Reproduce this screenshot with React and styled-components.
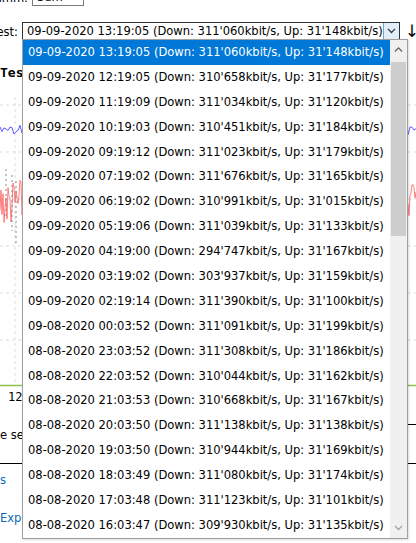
import styled, { createGlobalStyle } from "styled-components";

const Global = createGlobalStyle`
  html, body { margin: 0; padding: 0; background: #fff; overflow: hidden; }
  body { font-family: "DejaVu Sans Condensed", "Liberation Sans", sans-serif; font-size: 12.8px; color: #000; }
`;

const items = [
  ["09-09-2020 13:19:05", "311'060", "31'148"],
  ["09-09-2020 12:19:05", "310'658", "31'177"],
  ["09-09-2020 11:19:09", "311'034", "31'120"],
  ["09-09-2020 10:19:03", "310'451", "31'184"],
  ["09-09-2020 09:19:12", "311'023", "31'179"],
  ["09-09-2020 07:19:02", "311'676", "31'165"],
  ["09-09-2020 06:19:02", "310'991", "31'015"],
  ["09-09-2020 05:19:06", "311'039", "31'133"],
  ["09-09-2020 04:19:00", "294'747", "31'167"],
  ["09-09-2020 03:19:02", "303'937", "31'159"],
  ["09-09-2020 02:19:14", "311'390", "31'100"],
  ["09-08-2020 00:03:52", "311'091", "31'199"],
  ["08-08-2020 23:03:52", "311'308", "31'186"],
  ["08-08-2020 22:03:52", "310'044", "31'162"],
  ["08-08-2020 21:03:53", "310'668", "31'167"],
  ["08-08-2020 20:03:50", "311'138", "31'138"],
  ["08-08-2020 19:03:50", "310'944", "31'169"],
  ["08-08-2020 18:03:49", "311'080", "31'174"],
  ["08-08-2020 17:03:48", "311'123", "31'101"],
  ["08-08-2020 16:03:47", "309'930", "31'135"],
];

const label = (r) => `${r[0]} (Down: ${r[1]}kbit/s, Up: ${r[2]}kbit/s)`;

const Page = styled.div`
  position: relative;
  width: 416px;
  height: 543px;
  overflow: hidden;
`;

const Content = styled.div`
  display: flex;
  flex-direction: column;
  margin-top: -12px;
`;

const FormRow = styled.div`
  display: flex;
  align-items: center;
  height: 18px;
  margin-bottom: ${(p) => p.$mb || 0}px;
`;

// label column whose start is scrolled out of view on the left
const Label = styled.div`
  width: ${(p) => p.$w}px;
  flex-shrink: 0;
  display: flex;
  justify-content: flex-end;
  overflow: hidden;
  white-space: nowrap;
  padding-right: ${(p) => p.$pad}px;
  box-sizing: border-box;
  span { flex-shrink: 0; }
`;

const Select = styled.div`
  display: flex;
  align-items: stretch;
  height: 18px;
  width: ${(p) => p.$w}px;
  box-sizing: border-box;
  border: 1px solid ${(p) => (p.$open ? "#333" : "#7a7a7a")};
  background: #fff;
`;

const SelectText = styled.div`
  flex: 1;
  padding-left: 4px;
  line-height: 16px;
  white-space: nowrap;
  overflow: hidden;
`;

const SelectBtn = styled.div`
  width: 15px;
  display: flex;
  align-items: center;
  justify-content: center;
  background: ${(p) => (p.$open ? "#e1eefa" : "#fff")};
  border-left: 1px solid ${(p) => (p.$open ? "#6aa5dd" : "#fff")};
`;

const Arrow = styled.div`
  width: 14px;
  text-align: center;
  font-family: "DejaVu Sans", sans-serif;
  font-size: 17px;
  line-height: 18px;
  margin-left: 5px;
`;

const Heading = styled.div`
  font-family: "DejaVu Sans Mono", monospace;
  font-weight: bold;
  font-size: 13px;
  height: 18px;
  line-height: 18px;
  white-space: nowrap;
  margin-bottom: 15px;
`;

const ChartBox = styled.div`
  height: 292px;
`;

const AxisLabel = styled.div`
  font-family: "DejaVu Sans Mono", monospace;
  font-size: 12px;
  padding-left: 8px;
  height: 16px;
  line-height: 16px;
  margin-bottom: 19px;
`;

const InfoRow = styled.div`
  display: flex;
  align-items: flex-start;
  height: 26px;
  margin-bottom: 13px;
`;

const Para = styled.div`
  white-space: nowrap;
  margin-top: 2px;
  height: 18px;
  line-height: 18px;
`;

const TableEdge = styled.div`
  flex: 1;
  margin-left: 12px;
  border-top: 1px solid #000;
`;

const Rule = styled.div`
  height: 1px;
  background: #000;
`;

const Link = styled.div`
  color: #0b6bb8;
  height: 18px;
  line-height: 18px;
  white-space: nowrap;
  margin-top: ${(p) => p.$mt || 0}px;
`;

const List = styled.div`
  position: absolute;
  left: 22px;
  top: 39px;
  width: 386px;
  height: 500px;
  box-sizing: border-box;
  border: 1px solid #a0a0a0;
  background: #fff;
  display: flex;
  box-shadow: 1px 1px 2px rgba(0, 0, 0, 0.15);
`;

const Options = styled.div`
  flex: 1;
  display: flex;
  flex-direction: column;
  overflow: hidden;
`;

const Option = styled.div`
  height: 24.9px;
  line-height: 24.9px;
  padding-left: 5px;
  white-space: nowrap;
  flex-shrink: 0;
  background: ${(p) => (p.$active ? "#0078d7" : "transparent")};
  color: ${(p) => (p.$active ? "#fff" : "#000")};
`;

const Scrollbar = styled.div`
  width: 17px;
  background: #f0f0f0;
  display: flex;
  flex-direction: column;
`;

const ScrollBtn = styled.div`
  height: 20px;
  display: flex;
  align-items: center;
  justify-content: center;
`;

const Thumb = styled.div`
  height: 174px;
  margin: 2px 1px 0;
  background: #cdcdcd;
`;

const Track = styled.div`
  flex: 1;
`;

const Chevron = ({ up, color = "#606060", size = 9 }) => (
  <svg width={size} height={size * 0.6} viewBox="0 0 10 6">
    <path
      d={up ? "M1 5 L5 1 L9 5" : "M1 1 L5 5 L9 1"}
      fill="none"
      stroke={color}
      strokeWidth="1.4"
    />
  </svg>
);

// pseudo random noise for the chart
const rand = (() => {
  let s = 7;
  return () => {
    s = (s * 9301 + 49297) % 233280;
    return s / 233280;
  };
})();

const bluePts = [];
const redPts = [];
for (let x = 0; x <= 416; x += 2) {
  bluePts.push(`${x},${30 + rand() * 8 - (x % 10 === 0 ? 4 : 0)}`);
}
for (let x = 0; x <= 416; x += 1) {
  redPts.push(`${x},${82 + rand() * 48}`);
}

const Chart = () => (
  <svg width="416" height="292" viewBox="0 0 416 292">
    {[8, 55, 102, 149, 196, 243].map((y) => (
      <line key={y} x1="0" x2="416" y1={y} y2={y} stroke="#ddd" strokeDasharray="3 3" />
    ))}
    {[15, 120, 225, 330].map((x) => (
      <line key={x} x1={x} x2={x} y1="0" y2="288" stroke="#ddd" strokeDasharray="3 3" />
    ))}
    <polyline points={redPts.join(" ")} fill="none" stroke="#ff6060" strokeWidth="1" opacity="0.8" />
    {[6, 12, 16].map((x, i) => (
      <line key={x} x1={x} x2={x} y1={72 + i * 6} y2={120 + i * 14} stroke="#888" strokeDasharray="2 3" />
    ))}
    <polyline points={bluePts.join(" ")} fill="none" stroke="#5a5aff" strokeWidth="1" />
    <line x1="0" x2="416" y1="288.5" y2="288.5" stroke="#8bc34a" strokeWidth="1.5" />
  </svg>
);

export default function App() {
  return (
    <Page>
      <Global />
      <Content>
        <FormRow $mb={16}>
          <Label $w={32} $pad={4}><span>Diagramm:</span></Label>
          <Select $w={52}>
            <SelectText>Sum</SelectText>
            <SelectBtn>
              <Chevron />
            </SelectBtn>
          </Select>
        </FormRow>
        <FormRow $mb={24}>
          <Label $w={22} $pad={4}><span>Speedtest:</span></Label>
          <Select $w={381} $open>
            <SelectText>{label(items[0])}</SelectText>
            <SelectBtn $open>
              <Chevron color="#333" />
            </SelectBtn>
          </Select>
          <Arrow>↓</Arrow>
        </FormRow>
        <Heading>Testresultate</Heading>
        <ChartBox>
          <Chart />
        </ChartBox>
        <AxisLabel>12</AxisLabel>
        <InfoRow>
          <Para>e sehen Sie die Werte</Para>
          <TableEdge />
        </InfoRow>
        <Rule />
        <Link $mt={7}>s</Link>
        <Link $mt={20}>Export</Link>
      </Content>
      <List>
        <Options>
          {items.map((r, i) => (
            <Option key={i} $active={i === 0}>
              {label(r)}
            </Option>
          ))}
        </Options>
        <Scrollbar>
          <ScrollBtn>
            <Chevron up />
          </ScrollBtn>
          <Thumb />
          <Track />
          <ScrollBtn>
            <Chevron color="#a0a0a0" />
          </ScrollBtn>
        </Scrollbar>
      </List>
    </Page>
  );
}
